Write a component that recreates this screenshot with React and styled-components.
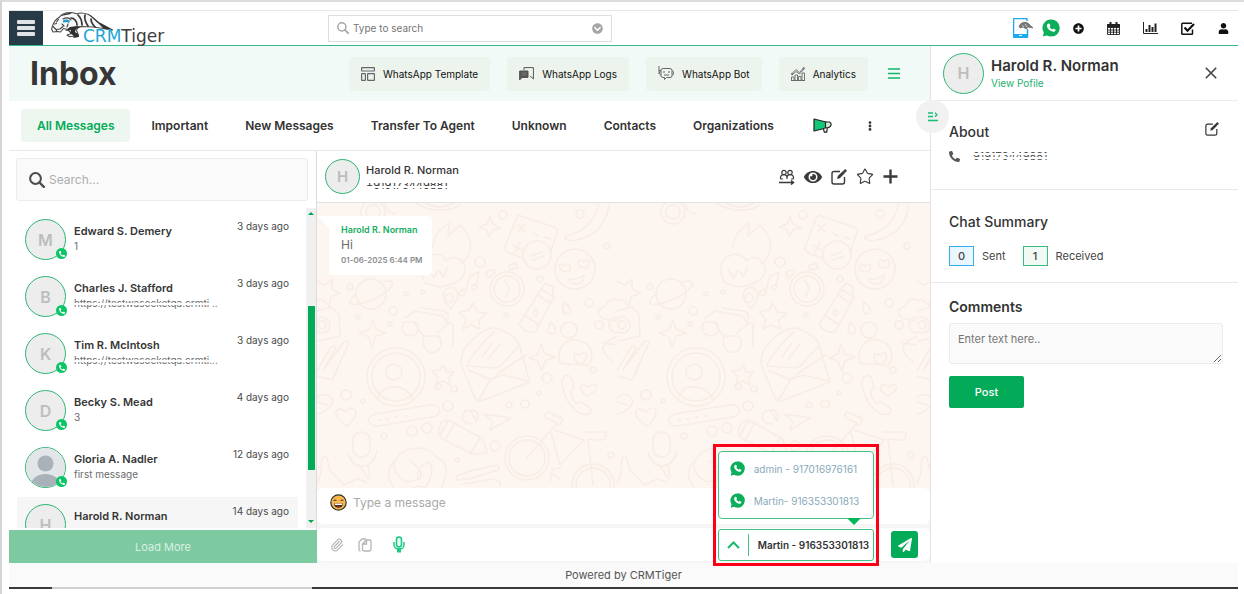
import React, { useState } from 'react';
import styled, { createGlobalStyle } from 'styled-components';
import { FaPlusCircle, FaPhoneAlt, FaChevronCircleDown, FaEye, FaEllipsisV, FaPaperPlane, FaUser } from 'react-icons/fa';
import { Paperclip, Star } from 'lucide-react';

const GlobalStyle = createGlobalStyle`
* {
  box-sizing: border-box;
}
body {
  margin: 0;
  background: #fff;
  color: #363636;
  font-family: Inter, "Liberation Sans", sans-serif;
  font-size: 11px;
}
button, input, textarea {
  font-family: inherit;
}
button {
  border: 0;
  padding: 0;
  background: none;
  color: inherit;
  cursor: pointer;
}
a {
  text-decoration: none;
}
h1, h2, h3, p, ul {
  margin: 0;
  padding: 0;
}
`;

const Page = styled.div`
min-height: 100vh;
border-top: 2px solid #dcdcdc;
border-left: 2px solid #d6d6d6;
padding: 8px 6px 0 7px;
display: flex;
flex-direction: column;
`;

/* top bar */
const TopBar = styled.header`
height: 36px;
display: flex;
align-items: center;
border-top: 1px solid #e6e6e6;
border-bottom: 1px solid #35b98a;
`;
const MenuButton = styled.button`
width: 34px;
align-self: stretch;
margin: 0 8px 0 0;
background: #263b47;
display: flex;
align-items: center;
justify-content: center;
`;
const Logo = styled.a`
width: 122px;
height: 34px;
position: relative;
`;
const LogoText = styled.span`
position: absolute;
left: 32px;
bottom: -1px;
font-family: "DejaVu Sans", sans-serif;
font-size: 17px;
line-height: 20px;
color: #3c3c3c;
b {
  font-weight: 400;
  color: #1ba7d8;
}
`;
const GlobalSearch = styled.label`
width: 284px;
height: 27px;
margin-left: 155px;
padding: 0 8px;
border: 1px solid #dedede;
display: flex;
align-items: center;
gap: 4px;
color: #a6a6a6;
`;
const GlobalSearchInput = styled.input`
flex: 1;
min-width: 0;
border: 0;
outline: 0;
padding: 0;
font-size: 10px;
&::placeholder {
  color: #757575;
  opacity: 1;
}
`;
const TopIcons = styled.nav`
margin-left: auto;
padding-right: 9px;
display: flex;
align-items: center;
color: #111;
`;
const IconButton = styled.button`
display: flex;
align-items: center;
justify-content: center;
width: ${(p) => p.$w || 16}px;
margin-left: ${(p) => p.$gap || 0}px;
`;

/* body */
const Body = styled.main`
flex: 1;
display: flex;
`;
const Workspace = styled.section`
flex: 1;
min-width: 0;
display: flex;
flex-direction: column;
`;
const TitleBar = styled.div`
height: 55px;
padding: 0 30px 0 21px;
background: #f2faf7;
display: flex;
align-items: center;
gap: 17px;
`;
const Title = styled.h1`
font-size: 32px;
line-height: 40px;
font-weight: 700;
margin-right: auto;
`;
const ActionButton = styled.button`
height: 34px;
padding: 0 12px;
border-radius: 4px;
background: #edf4ed;
display: flex;
align-items: center;
gap: 8px;
font-size: 10px;
font-weight: 400;
color: #111;
`;
const Tabs = styled.nav`
height: 50px;
padding: 0 12px;
border-bottom: 1px solid #ece8e8;
display: flex;
align-items: center;
gap: 5px;
`;
const Tab = styled.button`
height: 33px;
padding: 0 16px;
border-radius: 4px;
font-size: 12px;
font-weight: 600;
white-space: nowrap;
color: ${(p) => (p.$active ? '#03ab59' : '#333')};
background: ${(p) => (p.$active ? '#edf7f0' : 'transparent')};
`;
const Columns = styled.div`
flex: 1;
display: flex;
`;

/* contacts */
const Contacts = styled.aside`
width: 308px;
display: flex;
flex-direction: column;
border-right: 1px solid #dcdcdc;
`;
const ContactSearch = styled.label`
height: 43px;
margin: 7px 8px 7px 7px;
padding: 0 12px;
border: 1px solid #ececec;
border-radius: 3px;
background: #fafafa;
display: flex;
align-items: center;
gap: 4px;
color: #4b4b4b;
input {
  flex: 1;
  min-width: 0;
  border: 0;
  outline: 0;
  padding: 0;
  background: none;
  font-size: 12px;
}
input::placeholder {
  color: #adadad;
  opacity: 1;
}
`;
const ListArea = styled.div`
height: calc(100vh - 274px);
display: flex;
justify-content: space-between;
`;
const List = styled.ul`
flex: 1;
margin: 0 8px;
padding-top: 4px;
overflow: hidden;
list-style: none;
`;
const ContactRow = styled.li`
height: 57px;
padding: 7px 9px 0 8px;
display: flex;
gap: 8px;
background: ${(p) => (p.$selected ? '#f6f6f6' : 'none')};
`;
const ContactText = styled.div`
flex: 1;
min-width: 0;
padding-top: 4px;
`;
const ContactName = styled.h3`
font-size: 11px;
line-height: 16px;
font-weight: 600;
`;
const ContactMessage = styled.p`
font-size: 10px;
line-height: 14px;
color: #6c6c6c;
`;
const Time = styled.time`
font-size: 10px;
line-height: 14px;
color: #4a4a4a;
`;
/* numbers and links stay partly covered */
const COVERS = {
  link: 'linear-gradient(transparent 7px, #fff 7px 9px, transparent 9px)',
  phone: 'linear-gradient(#fff 5px, transparent 5px 8px, #fff 8px 10px, transparent 10px)',
  lines: 'repeating-linear-gradient(#fff 0 2px, transparent 2px 4px)',
};
const Redacted = styled.span`
display: inline-block;
position: relative;
white-space: nowrap;
&::after {
  content: '';
  position: absolute;
  inset: 0;
  background: ${(p) => COVERS[p.$cover]};
}
`;
const AvatarCircle = styled.div`
position: relative;
flex: none;
width: ${(p) => p.$size}px;
height: ${(p) => p.$size}px;
border: 1px solid #2bb673;
border-radius: 50%;
background: #ededed;
color: #bdbdbd;
display: flex;
align-items: center;
justify-content: center;
font-size: ${(p) => (p.$size > 36 ? 16 : 15)}px;
font-weight: 600;
`;
const AvatarBadge = styled.span`
position: absolute;
right: -2px;
bottom: 0;
width: 11px;
height: 11px;
border-radius: 50%;
background: #0cc567;
color: #fff;
display: flex;
align-items: center;
justify-content: center;
`;
const ScrollTrack = styled.div`
width: 10px;
padding: 4px 1px 4px 2px;
background: #f0f0f0;
display: flex;
flex-direction: column;
color: #03a557;
`;
const ScrollGap = styled.div`
flex: ${(p) => p.$grow};
`;
const ScrollThumb = styled.div`
flex: 164;
background: #03ab59;
`;
const LoadMore = styled.button`
height: 33px;
margin-top: 2px;
margin-right: -1px;
background: #7dc9a0;
color: #d9f0e3;
font-size: 11px;
`;

/* chat */
const Chat = styled.section`
flex: 1;
min-width: 0;
display: flex;
flex-direction: column;
background: #f6f6f6;
`;
const ChatHeader = styled.header`
height: 52px;
padding: 0 32px 0 8px;
background: #fff;
border-bottom: 1px solid #e2e2e2;
display: flex;
align-items: center;
gap: 6px;
`;
const ChatName = styled.h2`
font-size: 11px;
line-height: 16px;
font-weight: 500;
color: #333;
`;
const ChatPhone = styled.p`
font-size: 11px;
line-height: 14px;
`;
const ChatTools = styled.div`
margin-left: auto;
display: flex;
align-items: center;
gap: 9px;
color: #3a3a3a;
`;
const Conversation = styled.div`
flex: 1;
position: relative;
padding: 13px 12px;
background: #fdf5ef;
`;
const Wallpaper = styled.svg`
position: absolute;
inset: 0;
width: 100%;
height: 100%;
`;
const Bubble = styled.article`
position: relative;
width: fit-content;
padding: 7px 10px 8px 12px;
border-radius: 0 4px 4px 4px;
background: #fff;
&::before {
  content: '';
  position: absolute;
  top: 0;
  left: -12px;
  border-top: 12px solid #fff;
  border-left: 12px solid transparent;
}
h3 {
  font-size: 9px;
  line-height: 14px;
  font-weight: 600;
  color: #16ad62;
}
p {
  font-size: 12px;
  line-height: 16px;
  color: #6a6a6a;
}
time {
  display: block;
  font-size: 8px;
  line-height: 14px;
  font-weight: 600;
  color: #8d8d8d;
}
`;
const MessageBox = styled.label`
height: 36px;
padding: 0 13px 8px;
border-radius: 6px;
background: #fff;
display: flex;
align-items: center;
gap: 6px;
input {
  flex: 1;
  border: 0;
  outline: 0;
  padding: 0;
  background: none;
  font-size: 12px;
}
input::placeholder {
  color: #a9a9a9;
  opacity: 1;
}
`;
const Composer = styled.div`
height: 33px;
margin: 4px 0 2px;
padding: 0 12px 0 13px;
border-radius: 6px;
background: #fff;
display: flex;
align-items: center;
color: #b5b5b5;
`;
const Sender = styled.div`
position: relative;
margin-left: auto;
`;
const SenderButton = styled.button`
height: 32px;
padding: 0 4px 0 8px;
border: 1px solid #45c385;
border-radius: 3px;
background: #fff;
display: flex;
align-items: center;
font-size: 10px;
font-weight: 600;
color: #333;
white-space: nowrap;
svg {
  margin-right: 8px;
}
`;
const SenderLabel = styled.span`
padding: 5px 0 5px 9px;
border-left: 1px solid #45c385;
line-height: 12px;
`;
const SenderMenu = styled.ul`
position: absolute;
left: 0;
right: 0;
bottom: 42px;
padding: 1px 0;
border: 1px solid #45c385;
border-radius: 4px;
background: #fff;
list-style: none;
&::after {
  content: '';
  position: absolute;
  right: 12px;
  top: 100%;
  border-top: 7px solid #03b75a;
  border-left: 7px solid transparent;
  border-right: 7px solid transparent;
}
`;
const SenderOption = styled.button`
width: 100%;
height: 32px;
padding: 0 11px;
display: flex;
align-items: center;
gap: 9px;
font-size: 10px;
color: #89a9ba;
white-space: nowrap;
`;
const Highlight = styled.div`
position: absolute;
inset: -85px -5px -5px;
border: 3px solid #fb0017;
pointer-events: none;
z-index: 1;
`;
const SendButton = styled.button`
width: 27px;
height: 27px;
margin-left: 17px;
border-radius: 3px;
background: #03ab59;
color: #fff;
display: flex;
align-items: center;
justify-content: center;
`;

/* details */
const Details = styled.aside`
width: 308px;
position: relative;
border-left: 1px solid #e8e2e2;
`;
const ProfileBar = styled.header`
height: 55px;
padding: 0 21px 0 12px;
border-bottom: 1px solid #f0e9e9;
display: flex;
align-items: center;
gap: 7px;
color: #333;
h2 {
  font-size: 15px;
  line-height: 20px;
  font-weight: 600;
}
a {
  display: block;
  font-size: 10px;
  line-height: 14px;
  color: #1cb16e;
}
> button {
  margin-left: auto;
}
`;
const Knob = styled.button`
position: absolute;
left: -15px;
top: 54px;
width: 33px;
height: 33px;
border-radius: 50%;
background: #f1f1f1;
display: flex;
align-items: center;
justify-content: center;
`;
const Section = styled.section`
height: ${(p) => p.$h}px;
padding: ${(p) => p.$top}px 15px 0 18px;
border-bottom: ${(p) => (p.$last ? 0 : 1)}px solid #e9e9e9;
`;
const SectionHead = styled.div`
display: flex;
justify-content: space-between;
align-items: flex-start;
padding-right: 4px;
h3 {
  font-size: 14px;
  line-height: 20px;
  font-weight: ${(p) => (p.$bold ? 600 : 500)};
  color: #333;
}
`;
const PhoneLine = styled.p`
display: flex;
align-items: center;
gap: 13px;
margin-top: 7px;
line-height: 14px;
color: #555;
`;
const Counts = styled.div`
display: flex;
align-items: center;
gap: 8px;
margin-top: 14px;
font-size: 11px;
color: #444;
`;
const Count = styled.span`
width: 25px;
height: 20px;
border: 1px solid ${(p) => p.$line};
background: ${(p) => p.$fill};
text-align: center;
line-height: 18px;
font-weight: 500;
`;
const CountLabel = styled.span`
margin-right: 9px;
`;
const CommentBox = styled.textarea`
display: block;
width: 100%;
height: 41px;
margin-top: 6px;
padding: 8px;
border: 1px solid #ebebeb;
border-radius: 3px;
background: #fafafa;
font-size: 11px;
line-height: 14px;
resize: vertical;
outline: 0;
&::placeholder {
  color: #757575;
  opacity: 1;
}
`;
const PostButton = styled.button`
width: 75px;
height: 32px;
margin-top: 12px;
border-radius: 2px;
background: #03ab59;
color: #fff;
font-size: 11px;
font-weight: 500;
`;
const Footer = styled.footer`
height: 24px;
background: #fafafa;
text-align: center;
line-height: 24px;
font-size: 11px;
color: #555;
`;
const BottomRule = styled.div`
height: 2px;
margin-bottom: 5px;
display: grid;
grid-template-columns: 43px 260px 1fr;
background: #3a3a3a;
i {
  grid-column: 2;
  background: #cfcfcf;
}
`;

const CONTACTS = [
  { letter: 'M', name: 'Edward S. Demery', text: '1', time: '3 days ago' },
  { letter: 'B', name: 'Charles J. Stafford', text: 'https://testwasocketqa.crmti ..', time: '3 days ago', redacted: true },
  { letter: 'K', name: 'Tim R. McIntosh', text: 'https://testwasocketqa.crmti...', time: '3 days ago', redacted: true },
  { letter: 'D', name: 'Becky S. Mead', text: '3', time: '4 days ago' },
  { name: 'Gloria A. Nadler', text: 'first message', time: '12 days ago' },
  { letter: 'H', name: 'Harold R. Norman', text: '', time: '14 days ago', selected: true },
];

const TABS = ['All Messages', 'Important', 'New Messages', 'Transfer To Agent', 'Unknown', 'Contacts', 'Organizations'];

const MenuIcon = () => (
  <svg width="18" height="16" viewBox="0 0 18 16" fill="#dfe3e5">
    <rect width="18" height="4" rx="1" />
    <rect y="6" width="18" height="4" rx="1" />
    <rect y="12" width="18" height="4" rx="1" />
  </svg>
);

const SearchIcon = ({ size }) => (
  <svg width={size} height={size} viewBox="0 0 16 16" fill="none" stroke="currentColor">
    <circle cx="6.500" cy="6.500" r="5.400" strokeWidth="2" />
    <path d="M10.500 10.500l4.300 4.300" strokeWidth="2.400" strokeLinecap="round" />
  </svg>
);

const TigerMark = () => (
  <svg width="66" height="30" viewBox="0 0 66 30" fill="none" strokeLinecap="round" strokeLinejoin="round">
    <path d="M1.500 15c1-4 4-7 7-9 2-3 7-4.500 11-4.500 2 0 4 .5 6 1.200 4-1.200 8-.8 12 .8 4 2 6 5 10 8l14 7.500-9-1.500-10-1.500-12-.5-3 .5-2 3 2 5.500-9 1.200-2.500-1.700 4.500-1.500-4-4-4-1-3 3.500-3.500-.5-4 .5-1.500-3z" fill="#f7f7f7" stroke="#4a4a4a" strokeWidth="1.100" />
    <path d="M37 3c4 2 7 5.500 11 8.500l14 7.500-9-1-5-5c-4-3-7-7-11-10z" fill="#333" />
    <path d="M9 5.500c3-3 8-4 12-3.500l-3 1.500c-3 0-6 1-9 2z" fill="#333" />
    <path d="M20 7c3 0 6 3 6 7M27 4c3 3 4 6 4 10M34 4c-1 4 1 8 3 11M40 8c0 3 2 6 4 8" stroke="#333" strokeWidth="1.700" />
    <path d="M14 20l5-4 7-1 4 1-5 2-1 3 3 2 1 3-6 1 1-2-4-3 1-3z" fill="#2f2f2f" />
    <path d="M2 15.500l3 3 4-.5 3-2.500M5 18.500l1 2M7.500 8.500l-2 2.500M3.500 13l2-.5" stroke="#444" strokeWidth="1.100" />
    <path d="M12 9.500c2-1.500 5-1.500 7 .5l-1 2-2-1-4 .5z" fill="#1c9cc9" />
    <path d="M12 8c3-1.500 6-1.500 8 1M17 13l-1 3M11 13l2 2" stroke="#444" strokeWidth="1.100" />
  </svg>
);

const TabletIcon = () => (
  <svg width="20" height="20" viewBox="0 0 20 20" fill="none">
    <path d="M14 3V1.500a1 1 0 0 0-1-1H1.500a1 1 0 0 0-1 1v17a1 1 0 0 0 1 1H13.500a1 1 0 0 0 1-1V11" stroke="#1ba8ef" strokeWidth="1.500" />
    <path d="M1 16h13v3H1z" fill="#1ba8ef" />
    <path d="M6 17.500h3" stroke="#fff" />
    <path d="M6 8c2-4 7-5 10-2l4 4-5-1-2 2-3-2-3 1z" fill="#777" stroke="#555" strokeWidth=".6" />
    <path d="M9 7l2 2M12 6l2 3" stroke="#ddd" strokeWidth=".8" />
  </svg>
);

const WhatsAppMark = ({ size }) => (
  <svg width={size} height={size} viewBox="0 0 20 20">
    <path d="M10 .5A9.500 9.500 0 0 1 10.500 19.500c-2 0-3.700-.4-5-1.200L1 19.500l1-4.500A9.500 9.500 0 0 1 10 .5z" fill="#0cad5b" />
    <path d="M6.800 5.300c.8-.7 1.500-.3 1.800.4l.6 1.400c.2.700-.5 1.200-.8 1.600.7 1.400 1.700 2.400 3.200 3 .5-.4.900-1.100 1.500-.9l1.600.8c.6.400.3 1.400-.2 1.900-1.200 1.200-3.600.8-5.600-.6-2.200-1.600-3.800-4-3.400-6 .2-.7.700-1.200 1.300-1.600z" fill="#fff" />
  </svg>
);

const CalendarIcon = () => (
  <svg width="13" height="13" viewBox="0 0 13 13" fill="none" stroke="#222">
    <path d="M.5 2.500h12v10H.5zM.5 5.500h12M.5 8h12M.5 10.200h12M3.500 5v7.500M6.500 5v7.500M9.500 5v7.500" strokeWidth=".9" />
    <path d="M.5 2.500h12v2.500H.5z" fill="#222" />
    <path d="M3.500 0v3M9.500 0v3" strokeWidth="2" />
  </svg>
);

const ChartIcon = () => (
  <svg width="15" height="12" viewBox="0 0 15 12" fill="none" stroke="#222">
    <path d="M.5 0v11.500H15" />
    <path d="M3.500 10V7M6.500 10V3M9.500 10V5M12.500 10V1.500" strokeWidth="2" />
  </svg>
);

const CheckIcon = () => (
  <svg width="14" height="13" viewBox="0 0 14 13" fill="none" stroke="#111">
    <path d="M11.500 7.500v4a.8.8 0 0 1-.8.8H1.600a.8.8 0 0 1-.8-.8V2a.8.8 0 0 1 .8-.8H11" strokeWidth="1.500" />
    <path d="M3.500 5.500l3 3.200L13 2" strokeWidth="2.200" />
  </svg>
);

const TemplateIcon = () => (
  <svg width="14" height="14" viewBox="0 0 14 14" fill="none" stroke="#666" strokeWidth="1.200">
    <rect x=".6" y=".6" width="12.800" height="3.400" rx=".5" />
    <rect x=".6" y="6.600" width="3.800" height="6.800" rx=".5" />
    <rect x="6.600" y="6.600" width="6.800" height="6.800" rx=".5" />
  </svg>
);

const LogsIcon = () => (
  <svg width="15" height="14" viewBox="0 0 15 14" fill="none" stroke="#555">
    <path d="M5 3V.6h9.400V12l-2.600-2.500H11" />
    <path d="M.6 4H9v6.500H3L.6 13z" fill="#555" />
    <path d="M2.500 6h5M2.500 8h5" stroke="#888" strokeWidth=".7" />
  </svg>
);

const BotIcon = () => (
  <svg width="16" height="15" viewBox="0 0 16 15" fill="none" stroke="#666">
    <path d="M1 0v8M1 4.500h2" />
    <path d="M5 2.500h7a2 2 0 0 1 2 2v5a2 2 0 0 1-2 2H8.500l-2 2v-2H5a2 2 0 0 1-2-2v-5a2 2 0 0 1 2-2zM14 4.500c2 .5 2 4.500 0 5M3 5c-2 0-2 4 0 4" />
    <path d="M5 6h2M10 6h2M6 9h5" strokeWidth="1.200" />
  </svg>
);

const AnalyticsIcon = () => (
  <svg width="14" height="14" viewBox="0 0 14 14" fill="none" stroke="#666" strokeWidth=".9">
    <path d="M.5 13.500V10H3v3.500zM4 13.500V8h2.500v5.500zM7.500 13.500v-4H10v4zM11 13.500V6h2.500v7.500zM0 13.500h14" />
    <path d="M1 6.500l4-4 3.500 3L12.500 1M1 8l4-3.500L8.500 7 13 2" />
    <circle cx="1" cy="7" r=".8" />
    <circle cx="12.700" cy="1.300" r=".8" />
  </svg>
);

const LinesIcon = () => (
  <svg width="12" height="11" viewBox="0 0 12 11" stroke="#10b868" strokeWidth="1.600">
    <path d="M0 1h12M0 5.500h12M0 10h12" />
  </svg>
);

const HornIcon = () => (
  <svg width="19" height="15" viewBox="0 0 19 15" stroke="#222" strokeWidth="1.200" strokeLinejoin="round">
    <path d="M1 1l12 3v6L1 13z" fill="#12c878" />
    <path d="M12.500 4h4q2 1 1.500 3-1 3-5.500 3z" fill="#cfe9dd" />
    <path d="M10.500 11l.8 3.200h2.400l.6-4" fill="#fff" />
  </svg>
);

const CollapseIcon = () => (
  <svg width="12" height="10" viewBox="0 0 12 10" fill="none" stroke="#19bf77" strokeWidth="1.300">
    <path d="M1 1h5M1 4.500h5M1 8.500h10M8 .8l2 2-2 2" />
  </svg>
);

const EditIcon = ({ size }) => (
  <svg width={size} height={size} viewBox="0 0 16 16" fill="none" stroke="currentColor">
    <path d="M9 2.500H3a2 2 0 0 0-2 2v8.500a2 2 0 0 0 2 2h8.500a2 2 0 0 0 2-2V8" strokeWidth="1.400" />
    <path d="M6 10l.8-3L12 2l2 2-5.200 5.200z" fill="currentColor" stroke="none" />
    <path d="M13.800 2.200l.4-.4" strokeWidth="2.800" strokeLinecap="round" />
  </svg>
);

const TransferIcon = () => (
  <svg width="16" height="16" viewBox="0 0 16 16" fill="none" stroke="currentColor" strokeWidth="1.200">
    <circle cx="5" cy="3.500" r="2.200" />
    <circle cx="11" cy="3.500" r="2.200" />
    <path d="M1.500 10V9c0-2 1.500-3.300 3.500-3.300S8 7 8 9v1M8 9c0-2 1-3.300 3-3.300S14.500 7 14.500 9v1M1.500 10H4M12 10h2.500" />
    <path d="M0 13.500h14M12 11.500l2.500 2-2.500 2" strokeWidth="1.500" />
  </svg>
);

const PlusIcon = () => (
  <svg width="15" height="15" viewBox="0 0 15 15" stroke="currentColor" strokeWidth="2.400">
    <path d="M7.500 .5v14M.5 7.500h14" />
  </svg>
);

const CloseIcon = () => (
  <svg width="12" height="12" viewBox="0 0 12 12" stroke="#444" strokeWidth="1.600">
    <path d="M.8 .8l10.400 10.400M11.200 .8L.8 11.200" />
  </svg>
);

const SmileIcon = () => (
  <svg width="17" height="17" viewBox="0 0 17 17" fill="none">
    <circle cx="8.500" cy="8.500" r="7.700" fill="#f9b64a" stroke="#333" strokeWidth="1.200" />
    <path d="M3.500 7c.5-1.300 2.500-1.300 3 0M10.500 7c.5-1.300 2.500-1.300 3 0" stroke="#333" />
    <path d="M4 9.400h9c0 2.800-1.900 4.400-4.500 4.400s-4.500-1.600-4.500-4.400z" fill="#333" />
    <path d="M4.800 9.600h7.400v1.400H4.800z" fill="#fff" />
    <path d="M6.500 12.500c1-.8 3-.8 4 0-.9 1-3.100 1-4 0z" fill="#e11b22" />
  </svg>
);

const FilesIcon = () => (
  <svg width="14" height="14" viewBox="0 0 14 14" fill="none" stroke="currentColor" strokeWidth="1.300">
    <path d="M8.500 2H11.500a1.500 1.500 0 0 1 1.500 1.500v8a1.500 1.500 0 0 1-1.500 1.500H6a1.500 1.500 0 0 1-1.500-1.500V6zM8.500 2v4h-4M8 1H4L1 4v7.500a1.500 1.500 0 0 0 1.500 1.500" />
  </svg>
);

const MicIcon = () => (
  <svg width="12" height="17" viewBox="0 0 12 17" fill="none" stroke="#1cc885">
    <rect x="3.500" y="1" width="5" height="10" rx="2.500" fill="#e9fbf3" strokeWidth="1.600" />
    <path d="M1 6v3a5 4 0 0 0 10 0V6" strokeWidth="1.500" />
    <path d="M6 12.500v4" strokeWidth="4" />
  </svg>
);

const PersonPhoto = () => (
  <svg width="39" height="39" viewBox="0 0 39 39">
    <clipPath id="face"><circle cx="19.500" cy="19.500" r="19.500" /></clipPath>
    <g clipPath="url(#face)">
      <rect width="39" height="39" fill="#e3e6e8" />
      <circle cx="19.500" cy="15.500" r="8" fill="#a9b2b8" />
      <path d="M4 39c1-8 7-13 15.500-13S34 31 35 39z" fill="#a9b2b8" />
    </g>
  </svg>
);

/* pale doodles, one 300px tile repeated across the conversation */
const Doodles = () => (
  <Wallpaper aria-hidden="true">
    <defs>
      <pattern id="doodles" width="300" height="300" patternUnits="userSpaceOnUse">
        <g fill="none" stroke="#f7ece6" strokeWidth="1.600" strokeLinecap="round" strokeLinejoin="round">
          <path d="M68 0c2 8 6 12 11 10M99 0c12 8 32 10 44 2M108 0c10 5 20 5 28 0" />
          <circle cx="56" cy="9" r="12" />
          <circle cx="56" cy="9" r="7" />
          <path d="M173 13l3 8 8 4-8 2-4 7-2-7-8-3 8-3z" />
          <path d="M204 13l33 11q5 2 3 6l-10 28q-2 5-7 4l-31-12q-5-2-4-6l11-28q2-5 5-3zM196 42l9 5M203 39l-5 10M201 22l7 7M208 21l-7 8M216 30l5 3M227 34l6 2" />
          <circle cx="220" cy="52" r="14" fill="#fdf5ef" />
          <path d="M214 53l11-4M216 57l11-4" />
          <path d="M282 0c-4 18-15 29-33 33-4 3 3 6 11 4 18-4 29-16 32-34" />
          <circle cx="258" cy="66" r="20" />
          <path d="M245 68c-6-6 0-9 3-5 4-5 8 0 3 6zM263 64c-5-6 1-9 4-5 4-5 8 0 3 6zM252 76q9 1 15-4 0 9-8 9-6 0-7-5z" />
          <path d="M108 80c-8-16-4-24 6-28 10-3 15 4 15 6 8-7 20-2 19 10-2 12-16 14-25 16zM111 66l6 9 4-8 6 7 3-10M116 44c1-13 8-18 16-24l-1 13 12-11c13 12 15 28 1 39" />
          <circle cx="190" cy="86" r="17" />
          <circle cx="190" cy="86" r="13" />
          <path d="M178 69l-6 6q-6-6 1-8 4-1 5 2M193 67l-1-4 7-3 2 5zM188 77l4 8-3 9" />
          <path d="M0 78l8 4 7-6 0 10 8 4-9 4-2 9-7-7-5 2M0 108l14-4 8 7 1 22-22 5" />
          <circle cx="5" cy="122" r="8" />
          <circle cx="5" cy="122" r="4" />
          <circle cx="300" cy="122" r="8" />
          <circle cx="54" cy="91" r="15" />
          <path d="M39 91c-9 8-9 12 3 10 14-3 26-10 32-17 4-6-1-7-8-5" />
          <path d="M153 73l-4 15M153 73l9-4-3 13M149 88c-1-4-8 0-6 4 2 2 6 0 6-4zM160 83c-2-3-7 0-5 3 2 2 5 0 5-3z" />
          <path d="M134 106c-8-8-10-15-5-20 8-5 14 3 11 10z" />
          <circle cx="132" cy="95" r="4" />
          <path d="M156 100l4 9 10 1-8 7 1 9-9-4-8 4 3-10-7-7 10-2z" />
          <path d="M202 122l22-36 13 8-19 35q-9 2-16-7zM207 112l14 9M220 91l13 9M224 86l5-6 7 4v8" />
          <path d="M218 106q5 5 1 7-5-1-1-7" />
          <path d="M247 99c8 6 8 12 3 12s-5-6-3-12zM234 119c6 6 5 12 1 12-6-1-4-8-1-12zM300 117c-20 1-24-10-12-14 2-6 9-8 12-6" />
          <circle cx="252" cy="127" r="8" />
          <path d="M56 117l3 9 10 4-10 3-4 11-3-10-10-4 10-3z" />
          <path d="M87 119c-6 10 3 16 10 13 6-2 5-10 2-13zM107 133c-3 12 4 18 11 16 8-3 7-10 4-16zM97 119l10 15M88 115l10-7 28 5 4 7q4-10-3-12l-22-3M120 130l12-10 4 1v22" />
          <path d="M0 168l14-24q4-2 5 1l-13 22M6 167l21-28q4-2 5 1l-14 30M0 173l15 4 5-9" />
          <circle cx="79" cy="174" r="29" />
          <circle cx="79" cy="174" r="24" />
          <circle cx="77" cy="169" r="8" />
          <path d="M61 197c1-17 29-18 35 0" />
          <path d="M145 165c-3-12 2-20 10-28 9-9 20-15 29-10 14 6 19 11 20 22l9 30-51 20q-3-1-6-9l-11-26zM150 163c0-5 18-27 27-34M150 163l28 2q5-1 8-5l16-17M151 167l21 9q6-1 8-5l29-19M161 198l13-22 12-4 25 6M165 154l10-14M171 156l12-15" />
          <path d="M224 141l4 10 10 3-10 4-3 10-4-10-9-3 9-4z" />
          <path d="M243 160c-4-16 6-25 17-23 14 2 19 15 11 26-3-3-12 0-28-3M264 162c-12-7-7-14-1-10 5-6 11 2 1 10z" />
          <path d="M300 133c-18 9-18 14-4 26M286 140l14 2" />
          <path d="M248 173c-7 5 0 28 14 37 9 4 15-1 10-6l-8-5-5 1c-4-4-5-9-5-12l3-3-2-9q-3-5-7-3zM270 193c-12-8-5-15 1-9 8-7 15 2-1 9z" />
          <path d="M126 162l4 7h7l-5 5 1 8-7-4-7 4 2-8-6-6 8-1z" />
          <path d="M30 223c-20-12-9-22-1-14 7-10 18 0 1 14zM58 211l54-9c13-2 14 11 3 12l-54 9c-11 1-12-10-3-12z" />
          <path d="M62 217h1M70 216h1M79 214h1M88 213h1" strokeWidth="2" />
          <path d="M0 211c8-1 18-10 15-15-6-9-18-2-15 3l10 3M151 207c-8 2-8 14 4 14M160 218c-3-2-3-10-8-10 7-3 11 3 8 10M167 211l27 4-21 12 3-8z" />
          <path d="M122 226c2-11 10-10 17-5l27 15 4 14-15 1-29-15q-6-3-4-10zM131 218l-8 14M137 221l-8 15M163 235l-9 15" />
          <rect x="36" y="229" width="17" height="25" rx="8" />
          <path d="M31 250q4 13 14 13c8 0 14-8 15-15M44 264l8 13M51 262l2 12" />
          <path d="M77 285c-10-14-5-22 2-28 6-15 33-16 40-3 12 4 12 15 6 30M78 257q-4 14 12 22l13-3c4-9-4-13-10-18M102 276c-4-6 1-13 10-17q7 10-3 24M92 286l10-3 11 3" />
          <circle cx="210" cy="255" r="22" />
          <circle cx="210" cy="255" r="18" />
          <circle cx="276" cy="282" r="21" />
          <circle cx="276" cy="282" r="17" />
          <path d="M210 255l30-35-11-5q-3-5 2-6l15 7M238 227l29 10-24 25-9-33M243 265l-7 1-3 12M233 270l10 6M267 229l22 0q1 9-8 8l-10-1 5 46M240 222q8-1 3-9" />
          <path d="M0 280c9-12 0-25 9-27l4 14 14 15 13-6 9 3M140 277c-4-6 6-5 13-9l27-6q5 4-2 6l-26 8zM146 281l30-5q9 1 7 7" />
          <circle cx="163" cy="59" r="5" />
          <circle cx="186" cy="12" r="4" />
          <circle cx="263" cy="11" r="4" />
          <circle cx="76" cy="108" r="4" />
          <circle cx="272" cy="100" r="4" />
          <circle cx="230" cy="175" r="5" />
          <circle cx="29" cy="192" r="5" />
          <circle cx="131" cy="203" r="5" />
          <circle cx="208" cy="201" r="4" />
          <circle cx="95" cy="228" r="5" />
          <circle cx="110" cy="225" r="5" />
          <circle cx="178" cy="243" r="5" />
          <circle cx="33" cy="84" r="3" />
          <circle cx="89" cy="91" r="2" />
          <circle cx="106" cy="89" r="2" />
          <circle cx="223" cy="76" r="3" />
          <circle cx="189" cy="112" r="2" />
          <circle cx="41" cy="114" r="2" />
          <circle cx="73" cy="121" r="2" />
          <circle cx="121" cy="183" r="3" />
          <circle cx="137" cy="186" r="3" />
          <circle cx="46" cy="198" r="2" />
          <circle cx="192" cy="202" r="3" />
          <circle cx="222" cy="190" r="2" />
          <circle cx="282" cy="122" r="4" />
          <circle cx="276" cy="167" r="3" />
          <circle cx="294" cy="252" r="3" />
          <circle cx="140" cy="257" r="2" />
          <circle cx="67" cy="233" r="3" />
          <circle cx="290" cy="43" r="3" />
        </g>
      </pattern>
    </defs>
    <rect width="100%" height="100%" fill="url(#doodles)" />
  </Wallpaper>
);

const Contact = ({ contact }) => (
  <ContactRow $selected={contact.selected}>
    <AvatarCircle $size={41}>
      {contact.letter || <PersonPhoto />}
      <AvatarBadge><FaPhoneAlt size={6} /></AvatarBadge>
    </AvatarCircle>
    <ContactText>
      <ContactName>{contact.name}</ContactName>
      <ContactMessage>
        {contact.redacted ? <Redacted $cover="link">{contact.text}</Redacted> : contact.text}
      </ContactMessage>
    </ContactText>
    <Time>{contact.time}</Time>
  </ContactRow>
);

const App = () => {
  const [tab, setTab] = useState('All Messages');
  const [menuOpen, setMenuOpen] = useState(true);

  return (
    <Page>
      <GlobalStyle />
      <TopBar>
        <MenuButton aria-label="Menu"><MenuIcon /></MenuButton>
        <Logo href="#">
          <TigerMark />
          <LogoText><b>CRM</b>Tiger</LogoText>
        </Logo>
        <GlobalSearch>
          <SearchIcon size={12} />
          <GlobalSearchInput placeholder="Type to search" aria-label="Type to search" />
          <FaChevronCircleDown size={11} />
        </GlobalSearch>
        <TopIcons>
          <IconButton aria-label="Mobile" $w={20}><TabletIcon /></IconButton>
          <IconButton aria-label="WhatsApp" $w={18} $gap={9}><WhatsAppMark size={18} /></IconButton>
          <IconButton aria-label="Add" $w={12} $gap={12}><FaPlusCircle size={11} /></IconButton>
          <IconButton aria-label="Calendar" $w={13} $gap={23}><CalendarIcon /></IconButton>
          <IconButton aria-label="Reports" $w={15} $gap={23}><ChartIcon /></IconButton>
          <IconButton aria-label="Tasks" $w={14} $gap={23}><CheckIcon /></IconButton>
          <IconButton aria-label="User" $w={12} $gap={22}><FaUser size={11} /></IconButton>
        </TopIcons>
      </TopBar>

      <Body>
        <Workspace>
          <TitleBar>
            <Title>Inbox</Title>
            <ActionButton><TemplateIcon />WhatsApp Template</ActionButton>
            <ActionButton><LogsIcon />WhatsApp Logs</ActionButton>
            <ActionButton><BotIcon />WhatsApp Bot</ActionButton>
            <ActionButton><AnalyticsIcon />Analytics</ActionButton>
            <IconButton aria-label="More views" $gap={2} $w={13}><LinesIcon /></IconButton>
          </TitleBar>
          <Tabs>
            {TABS.map((name) => (
              <Tab key={name} $active={name === tab} onClick={() => setTab(name)}>{name}</Tab>
            ))}
            <IconButton aria-label="Broadcast" $w={19} $gap={18}><HornIcon /></IconButton>
            <IconButton aria-label="More" $w={10} $gap={28}><FaEllipsisV size={10} /></IconButton>
          </Tabs>

          <Columns>
            <Contacts>
              <ContactSearch>
                <SearchIcon size={16} />
                <input placeholder="Search..." aria-label="Search" />
              </ContactSearch>
              <ListArea>
                <List>
                  {CONTACTS.map((c) => <Contact key={c.name} contact={c} />)}
                </List>
                <ScrollTrack>
                  <svg width="6" height="4" viewBox="0 0 6 4" fill="currentColor"><path d="M0 3l3-3 3 3z" /></svg>
                  <ScrollGap $grow={90} />
                  <ScrollThumb />
                  <ScrollGap $grow={50} />
                  <svg width="6" height="4" viewBox="0 0 6 4" fill="currentColor"><path d="M0 0l3 3 3-3z" /></svg>
                </ScrollTrack>
              </ListArea>
              <LoadMore>Load More</LoadMore>
            </Contacts>

            <Chat>
              <ChatHeader>
                <AvatarCircle $size={35}>H</AvatarCircle>
                <div>
                  <ChatName>Harold R. Norman</ChatName>
                  <ChatPhone><Redacted $cover="phone">+919173449881</Redacted></ChatPhone>
                </div>
                <ChatTools>
                  <IconButton aria-label="Transfer"><TransferIcon /></IconButton>
                  <IconButton aria-label="Watch" $w={18}><FaEye size={18} /></IconButton>
                  <IconButton aria-label="Edit"><EditIcon size={16} /></IconButton>
                  <IconButton aria-label="Star" $w={18}><Star size={19} strokeWidth={1.5} /></IconButton>
                  <IconButton aria-label="Add" $w={15}><PlusIcon /></IconButton>
                </ChatTools>
              </ChatHeader>
              <Conversation>
                <Doodles />
                <Bubble>
                  <h3>Harold R. Norman</h3>
                  <p>Hi</p>
                  <time>01-06-2025 6:44 PM</time>
                </Bubble>
              </Conversation>
              <MessageBox>
                <SmileIcon />
                <input placeholder="Type a message" aria-label="Type a message" />
              </MessageBox>
              <Composer>
                <IconButton aria-label="Attach" $w={14}><Paperclip size={14} /></IconButton>
                <IconButton aria-label="Templates" $w={14} $gap={14}><FilesIcon /></IconButton>
                <IconButton aria-label="Record" $w={12} $gap={21}><MicIcon /></IconButton>
                <Sender>
                  {menuOpen && (
                    <SenderMenu>
                      <li><SenderOption><WhatsAppMark size={15} />admin - 917016976161</SenderOption></li>
                      <li><SenderOption><WhatsAppMark size={15} />Martin- 916353301813</SenderOption></li>
                    </SenderMenu>
                  )}
                  <SenderButton aria-expanded={menuOpen} onClick={() => setMenuOpen(!menuOpen)}>
                    <svg width="13" height="8" viewBox="0 0 13 8" fill="none" stroke="#19b96c" strokeWidth="2"><path d="M1 7l5.500-5.500L12 7" /></svg>
                    <SenderLabel>Martin - 916353301813</SenderLabel>
                  </SenderButton>
                  <Highlight />
                </Sender>
                <SendButton aria-label="Send"><FaPaperPlane size={14} /></SendButton>
              </Composer>
            </Chat>
          </Columns>
        </Workspace>

        <Details>
          <ProfileBar>
            <AvatarCircle $size={41}>H</AvatarCircle>
            <div>
              <h2>Harold R. Norman</h2>
              <a href="#profile">View Pofile</a>
            </div>
            <IconButton aria-label="Close" $w={12}><CloseIcon /></IconButton>
          </ProfileBar>
          <Knob aria-label="Collapse"><CollapseIcon /></Knob>
          <Section $h={89} $top={21}>
            <SectionHead>
              <h3>About</h3>
              <IconButton aria-label="Edit contact" $w={14}><EditIcon size={14} /></IconButton>
            </SectionHead>
            <PhoneLine><FaPhoneAlt size={11} /><Redacted $cover="lines">919173449881</Redacted></PhoneLine>
          </Section>
          <Section $h={93} $top={22}>
            <SectionHead><h3>Chat Summary</h3></SectionHead>
            <Counts>
              <Count $line="#35aeea" $fill="#eaf6fd">0</Count>
              <CountLabel>Sent</CountLabel>
              <Count $line="#3dbb7c" $fill="#f0f9f4">1</Count>
              <CountLabel>Received</CountLabel>
            </Counts>
          </Section>
          <Section $top={14} $last>
            <SectionHead $bold><h3>Comments</h3></SectionHead>
            <CommentBox placeholder="Enter text here.." aria-label="Comments" />
            <PostButton>Post</PostButton>
          </Section>
        </Details>
      </Body>
      <Footer>Powered by CRMTiger</Footer>
      <BottomRule><i /></BottomRule>
    </Page>
  );
};

export default App;
